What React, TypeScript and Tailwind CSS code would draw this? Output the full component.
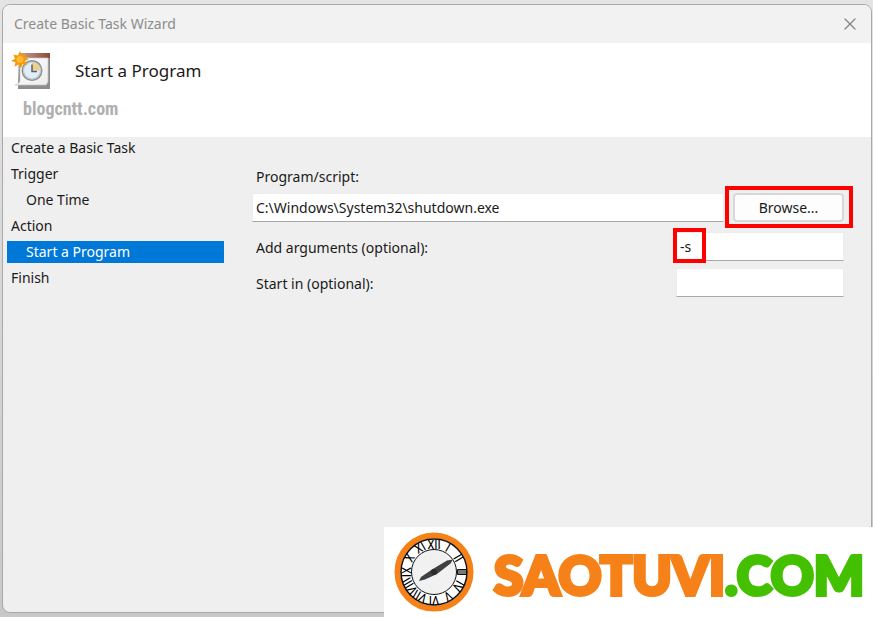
import { X } from "lucide-react";

const steps = [
  { name: "Create a Basic Task" },
  { name: "Trigger" },
  { name: "One Time", sub: true },
  { name: "Action" },
  { name: "Start a Program", sub: true, active: true },
  { name: "Finish" },
];

const numerals = ["XII", "I", "II", "", "IV", "V", "VI", "VII", "VIII", "IX", "X", "XI"];

const inputStyle =
  "h-[29px] border border-[#ececec] border-b-[#a8a8a8] bg-white px-[3px] text-sm text-[#1a1a1a] outline-none";

const TaskIcon = () => {
  return (
    <svg width="40" height="40" viewBox="0 0 40 40" aria-hidden="true">
      <defs>
        <linearGradient id="top" x1="0" x2="1">
          <stop offset="0" stopColor="#c9a294" />
          <stop offset="1" stopColor="#8a4a38" />
        </linearGradient>
        <linearGradient id="page" x1="0" y1="0" x2="1" y2="1">
          <stop offset="0" stopColor="#ffffff" />
          <stop offset="1" stopColor="#ececec" />
        </linearGradient>
      </defs>
      <path d="M8 2h31v36H7v-4z" fill="#8d8d8d" />
      <path d="M8 2h31v5H8z" fill="url(#top)" />
      <path d="M9 7v22c0 3-2 4-5 5h31l2-3V7z" fill="url(#page)" stroke="#c4c4c4" strokeWidth=".7" />
      <circle cx="21" cy="19.500" r="10.500" fill="#858b92" />
      <circle cx="21" cy="19.500" r="9.300" fill="#c5cacf" />
      <circle cx="21" cy="19.500" r="7.800" fill="#e2eef6" />
      <path d="M21 19.500v-7.800a7.800 7.800 0 0 1 7.800 7.800z" fill="#f3d080" />
      <path d="M21 13.500v7h5" fill="none" stroke="#4c6480" strokeWidth="1.500" />
      <path
        d="M9 0l1.800 4.200L14.800 2l-1 4.600 4.200 1.400-4 2 2.300 4-4.600-1-1.700 4.500-2.500-4-4 2.200 1-4.500L0 10l4-2.300L2.300 3.500l4.500 1z"
        fill="#f59a0c"
      />
      <circle cx="9" cy="8.500" r="3.500" fill="#ffb92e" />
    </svg>
  );
};

const ClockLogo = () => {
  return (
    <svg width="80" height="80" viewBox="-40 -40 80 80" aria-hidden="true" className="shrink-0">
      <circle r="36.500" fill="#fff" stroke="#f58118" strokeWidth="6" />
      <circle r="33" fill="#fff" stroke="#111" strokeWidth="1.500" />
      <circle r="22.500" fill="#f1f1f1" stroke="#111" strokeWidth="1" />
      {numerals.map((n, i) => (
        <text
          key={i}
          y="-23.500"
          textAnchor="middle"
          transform={`rotate(${i * 30})`}
          className="fill-black font-['Roboto_Condensed','Liberation_Serif',serif] text-[13px]"
        >
          {n}
        </text>
      ))}
      <path d="M23.500-2.500h9v5h-9z" fill="#777" stroke="#111" />
      <path d="M-15 9l2-4L-2-2.500 13-11.500l6-1-2.500 4L3 2-9 7.500z" fill="#3f4042" />
      <circle r="3" fill="#2b2b2b" />
    </svg>
  );
};

const App = () => {
  return (
    <div className="relative flex min-h-screen bg-[#d4d4d4] bg-linear-to-b from-[#e4e4e4] to-[#c8c8c8] pt-1 pr-px pb-1 pl-[2px] font-['Noto_Sans','Open_Sans',sans-serif] text-sm text-[#1a1a1a]">
      <div className="flex flex-1 flex-col overflow-hidden rounded-lg border border-[#a9a9a9] bg-[#efefef]">
        <header className="flex h-[38px] shrink-0 items-center justify-between bg-[#f2f2f2] pr-[11px] pl-[11px]">
          <span className="text-sm text-[#8c8c8c]">Create Basic Task Wizard</span>
          <button type="button" aria-label="Close" className="text-[#858585]">
            <X size={20} strokeWidth={1.5} />
          </button>
        </header>

        <div className="h-[94px] shrink-0 bg-white pt-2 pl-2">
          <div className="flex items-center gap-6">
            <TaskIcon />
            <h1 className="text-[17px] leading-7">Start a Program</h1>
          </div>
          <p className="mt-1 pl-3 font-['Roboto_Condensed','Liberation_Sans',sans-serif] text-lg leading-7 font-bold text-[#b0b0b0]">
            blogcntt.com
          </p>
        </div>

        <div className="flex flex-1">
          <nav className="w-[225px] shrink-0 pl-1">
            <ul className="flex w-[217px] flex-col gap-1">
              {steps.map((s) => (
                <li
                  key={s.name}
                  className={`flex h-[22px] items-center ${s.sub ? "pl-[19px]" : "pl-1"} ${s.active ? "bg-[#0078d7] text-white" : ""}`}
                >
                  {s.name}
                </li>
              ))}
            </ul>
          </nav>

          <form className="flex-1 pt-[30px] pr-[27px] pl-6">
            <label htmlFor="program" className="block pl-1 leading-5">
              Program/script:
            </label>
            <div className="mt-[6px] flex gap-[9px]">
              <input
                id="program"
                defaultValue="C:\Windows\System32\shutdown.exe"
                className={`${inputStyle} min-w-0 flex-1`}
              />
              <div className="relative w-[111px]">
                <button
                  type="button"
                  className="h-[29px] w-full rounded border-2 border-[#d8d8d8] bg-[#fdfdfd]"
                >
                  Browse...
                </button>
                <div className="pointer-events-none absolute -top-[7px] -right-[9px] -bottom-[6px] -left-2 border-4 border-[#fe0000]" />
              </div>
            </div>
            <div className="mt-[10px] flex items-center justify-between">
              <label htmlFor="args" className="pt-[2px] pl-1">
                Add arguments (optional):
              </label>
              <div className="relative">
                <input id="args" defaultValue="-s" className={`${inputStyle} w-[168px]`} />
                <div className="pointer-events-none absolute -top-1 -left-[3px] h-[35px] w-[33px] border-4 border-[#fe0000]" />
              </div>
            </div>
            <div className="mt-[7px] flex items-center justify-between">
              <label htmlFor="startin" className="pt-[2px] pl-1">
                Start in (optional):
              </label>
              <input id="startin" className={`${inputStyle} w-[168px]`} />
            </div>
          </form>
        </div>
      </div>

      <div className="absolute right-0 bottom-0 flex h-[90px] w-[489px] items-center gap-5 bg-white pl-[10px]">
        <ClockLogo />
        <p className="pt-1 font-['Lato',sans-serif] text-[53px] leading-none font-black whitespace-nowrap text-[#f58118] [-webkit-text-stroke:4px]">
          SAOTUVI<span className="text-[#43c000]">.COM</span>
        </p>
      </div>
    </div>
  );
};

export default App;
